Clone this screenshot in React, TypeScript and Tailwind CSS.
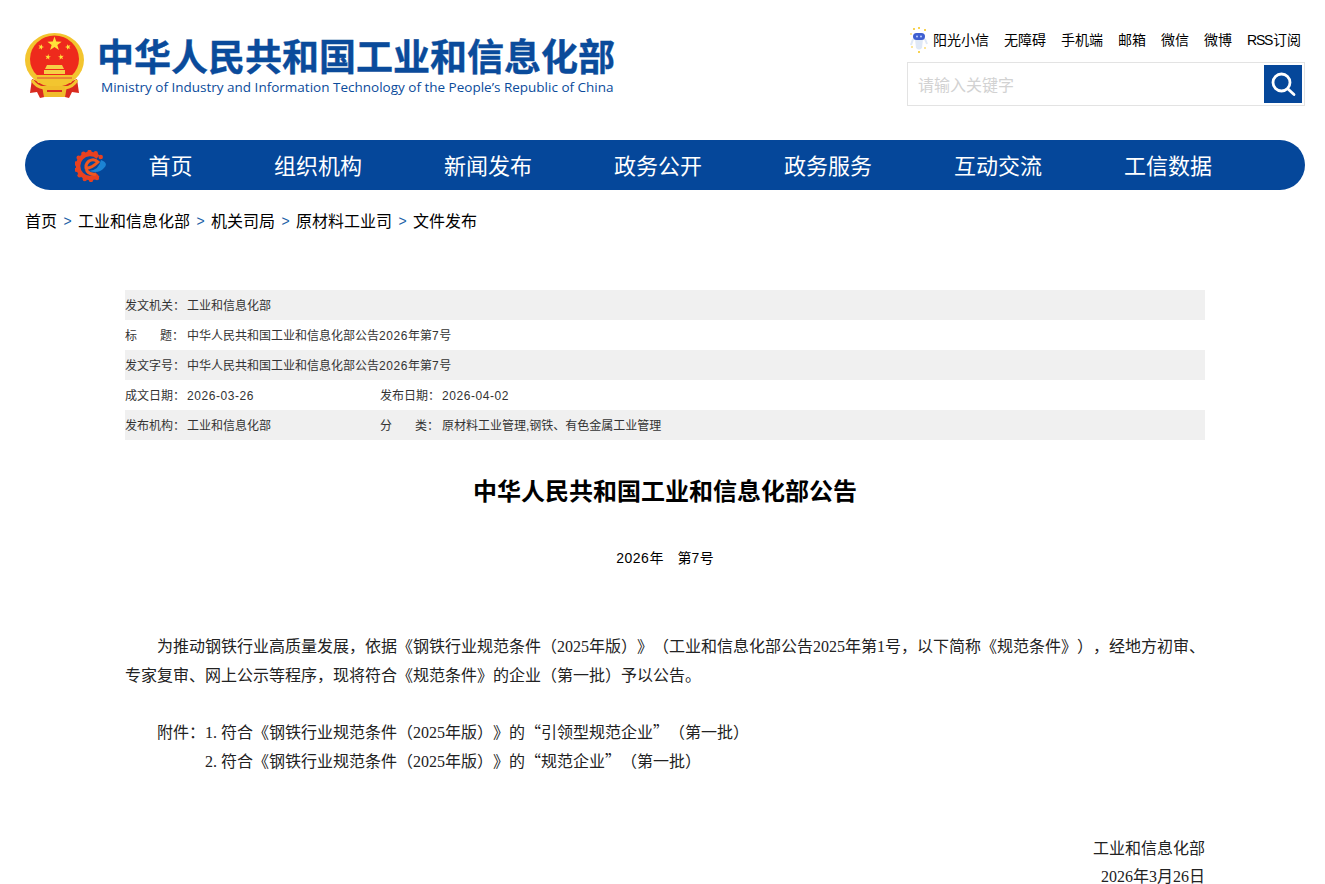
const cjk = "font-['Liberation_Sans','Noto_Sans_CJK_SC',sans-serif]"
const serif = "font-['Liberation_Serif','Noto_Sans_CJK_SC',serif]"

const topLinks = ['无障碍', '手机端', '邮箱', '微信', '微博']
const navItems = ['组织机构', '新闻发布', '政务公开', '政务服务', '互动交流', '工信数据']
const crumbs = ['工业和信息化部', '机关司局', '原材料工业司', '文件发布']

function Star({ x, y, r, rot = 0 }: { x: number; y: number; r: number; rot?: number }) {
  const pts = []
  for (let i = 0; i < 10; i++) {
    const a = (Math.PI / 5) * i - Math.PI / 2 + rot
    const d = i % 2 ? r * 0.4 : r
    pts.push(`${x + d * Math.cos(a)},${y + d * Math.sin(a)}`)
  }
  return <polygon points={pts.join(' ')} fill="#ffe23a" />
}

function Emblem() {
  return (
    <svg width="60" height="66" viewBox="0 0 60 66" className="shrink-0">
      <path d="M7 46 L5 60 L12 59 L15 65 L24 63 L24 52 Z" fill="#d92a1f" />
      <path d="M52 46 L54 60 L47 59 L44 65 L36 63 L36 52 Z" fill="#d92a1f" />
      <ellipse cx="29.5" cy="27" rx="29.5" ry="27" fill="#f3c52f" />
      <ellipse cx="29.5" cy="26" rx="24.5" ry="23.5" fill="#ee2a1c" />
      <Star x={29.5} y={11} r={7.5} />
      <Star x={16} y={14} r={3} rot={0.3} />
      <Star x={43} y={14} r={3} rot={-0.3} />
      <Star x={23} y={24} r={3} rot={0.15} />
      <Star x={36} y={24} r={3} rot={-0.15} />
      <path d="M22 32 H37 L39 36 H20 Z M19 37 H40 V41 H19 Z" fill="#f6cf45" />
      <path d="M9 42 H50 L46 50 H13 Z" fill="#f3c52f" />
      <path d="M12 45 H47" stroke="#e0463a" strokeWidth="1" />
      <path d="M17 53 H42 L40 64 H19 Z" fill="#f0bd2b" />
      <path d="M22 58 H37" stroke="#d92a1f" strokeWidth="2" />
      <path d="M7 47 Q11 54 19 55" stroke="#f3c52f" strokeWidth="3" fill="none" />
      <path d="M52 47 Q48 54 40 55" stroke="#f3c52f" strokeWidth="3" fill="none" />
    </svg>
  )
}

function GearLogo() {
  const teeth = []
  for (let i = 0; i < 11; i++) {
    const a = ((i * 26 + 60) * Math.PI) / 180
    teeth.push(<circle key={i} cx={15 + 14 * Math.cos(a)} cy={16 + 14 * Math.sin(a)} r="2.2" fill="#e8411f" />)
  }
  return (
    <svg width="33" height="32" viewBox="0 0 33 32" className="shrink-0">
      {teeth}
      <path d="M23 7 A12 12 0 1 0 23 25" stroke="#e8411f" strokeWidth="4.5" fill="none" />
      <path d="M10 18 Q16 19 23 12 Q19 8 14 11 Q9 15 12 21 Q15 25 21 24" stroke="#f0571f" strokeWidth="3" fill="none" />
      <path d="M14 21 Q24 20 26 10 Q34 13 29 18 Q24 24 14 21 Z" fill="#1c83d4" />
    </svg>
  )
}

function Robot() {
  return (
    <svg width="18" height="26" viewBox="0 0 18 26" className="shrink-0">
      <path d="M5 12 H13 L12 21 Q9 24 6 21 Z" fill="#dfe8f6" />
      <path d="M3 12 L1 18 M15 12 L17 17" stroke="#dfe8f6" strokeWidth="2" />
      <rect x="3" y="6" width="12" height="7" rx="3.5" fill="#3f5fd0" />
      <circle cx="7" cy="9.5" r="1" fill="#bcd0ff" />
      <circle cx="11" cy="9.5" r="1" fill="#bcd0ff" />
      <g fill="#f5c518">
        <circle cx="4" cy="2" r="1" />
        <circle cx="9" cy="1" r="1" />
        <circle cx="15" cy="3" r="1" />
        <circle cx="1" cy="7" r="0.8" />
        <circle cx="2" cy="20" r="0.8" />
        <circle cx="9" cy="25" r="1" />
        <circle cx="15" cy="21" r="0.8" />
      </g>
    </svg>
  )
}

function Label({ a, b }: { a: string; b: string }) {
  return (
    <span className="flex w-[62px] shrink-0">
      <span className="flex w-[47px] justify-between">
        <span>{a}</span>
        <span>{b}</span>
      </span>
      <span>：</span>
    </span>
  )
}

function MetaRow({ children, shaded }: { children: React.ReactNode; shaded?: boolean }) {
  return <div className={`flex h-[30px] items-center pt-[1px] ${shaded ? 'bg-[#f0f0f0]' : ''}`}>{children}</div>
}

function Num({ children }: { children: React.ReactNode }) {
  return <span className="tracking-[0.55px]">{children}</span>
}

function Meta({ label, children }: { label: string; children: React.ReactNode }) {
  return (
    <div className="flex w-[255px] shrink-0 whitespace-nowrap">
      <span className="w-[62px] shrink-0">{label}：</span>
      <span>{children}</span>
    </div>
  )
}

// full-width curly quotes, as the CJK face draws them
function Q({ children }: { children: React.ReactNode }) {
  return <span className="font-['Noto_Sans_CJK_SC',sans-serif] leading-none">{children}</span>
}

export default function App() {
  return (
    <div className={`w-[1325px] bg-white ${cjk}`}>
      <header className="flex h-[140px] justify-between pl-[25px] pr-[20px]">
        <div className="flex pt-[33px]">
          <Emblem />
          <div className="ml-[12px]">
            <div className="mt-[5px] whitespace-nowrap text-[37px] font-bold leading-[42px] text-[#0a4b9b] [-webkit-text-stroke:0.4px_#0a4b9b]">中华人民共和国工业和信息化部</div>
            <div className="-mt-[2px] ml-[4px] whitespace-nowrap font-['Open_Sans',sans-serif] text-[13.5px] leading-[18px] text-[#0a4b9b]">
              Ministry of Industry and Information Technology of the People’s Republic of China
            </div>
          </div>
        </div>
        <div className="w-[398px] pt-[27px]">
          <div className="flex h-[26px] items-center justify-end gap-[15px] pr-[4px] text-[14px] text-black">
            <span className="flex items-center gap-[5px]">
              <Robot />
              阳光小信
            </span>
            {topLinks.map((t) => (
              <span key={t}>{t}</span>
            ))}
            <span>
              <span className="tracking-[-1.3px]">RSS</span>
              <span className="ml-[1px]">订阅</span>
            </span>
          </div>
          <div className="mt-[9px] flex h-[44px] items-center justify-between border border-[#e3e3e3] pl-[10px] pr-[2px]">
            <span className="pt-[3px] text-[16px] text-[#d2d2d2]">请输入关键字</span>
            <button className="flex h-[38px] w-[38px] items-center justify-center bg-[#05479a]">
              <svg width="26" height="26" viewBox="0 0 26 26" fill="none" stroke="white" strokeWidth="2.8" strokeLinecap="round">
                <circle cx="11.5" cy="11.5" r="8.5" />
                <path d="M18 18 L24 23.5" />
              </svg>
            </button>
          </div>
        </div>
      </header>

      <nav className="ml-[25px] mr-[20px] flex h-[50px] items-center rounded-[25px] bg-[#05479a] pl-[50px] pt-[2px] text-[22px] text-white">
        <GearLogo />
        <span className="w-[125px] text-center">首页</span>
        {navItems.map((t) => (
          <span key={t} className="w-[170px] text-center">
            {t}
          </span>
        ))}
      </nav>

      <div className="ml-[25px] mt-[20px] flex h-[23px] items-center text-[16px] text-black">
        <span>首页</span>
        {crumbs.map((c) => (
          <span key={c} className="flex items-center">
            <span className="w-[21px] text-center text-[14px] text-[#1e5fa8]">&gt;</span>
            <span>{c}</span>
          </span>
        ))}
      </div>

      <main className="ml-[125px] mr-[120px] mt-[57px]">
        <div className="text-[12px] text-[#333]">
          <MetaRow shaded>
            <Meta label="发文机关">工业和信息化部</Meta>
          </MetaRow>
          <MetaRow>
            <Label a="标" b="题" />
            <span>
              中华人民共和国工业和信息化部公告<Num>2026</Num>年第<Num>7</Num>号
            </span>
          </MetaRow>
          <MetaRow shaded>
            <Meta label="发文字号">
              中华人民共和国工业和信息化部公告<Num>2026</Num>年第<Num>7</Num>号
            </Meta>
          </MetaRow>
          <MetaRow>
            <Meta label="成文日期">
              <Num>2026-03-26</Num>
            </Meta>
            <Meta label="发布日期">
              <Num>2026-04-02</Num>
            </Meta>
          </MetaRow>
          <MetaRow shaded>
            <Meta label="发布机构">工业和信息化部</Meta>
            <Label a="分" b="类" />
            <span>原材料工业管理,钢铁、有色金属工业管理</span>
          </MetaRow>
        </div>

        <h1 className="mt-[34px] text-center text-[24px] font-bold leading-[36px] text-black">中华人民共和国工业和信息化部公告</h1>
        <p className="mt-[36px] text-center text-[14px] leading-[24px] text-black">
          <span className="tracking-[0.5px]">2026</span>年　第<span className="tracking-[0.5px]">7</span>号
        </p>

        <div className={`mt-[63px] text-[16px] leading-[28.8px] text-[#222] [text-spacing-trim:space-all] ${serif}`}>
          <p className="indent-[32px]">
            为推动钢铁行业高质量发展，依据《钢铁行业规范条件（2025年版）》（工业和信息化部公告2025年第1号，以下简称《规范条件》），经地方初审、专家复审、网上公示等程序，现将符合《规范条件》的企业（第一批）予以公告。
          </p>
          <p className="mt-[28.8px] pl-[32px]">
            附件：1<span className="tracking-[4px]">.</span>符合《钢铁行业规范条件（2025年版）》的<Q>“</Q>引领型规范企业<Q>”</Q>（第一批）
          </p>
          <p className="pl-[80px]">
            2<span className="tracking-[4px]">.</span>符合《钢铁行业规范条件（2025年版）》的<Q>“</Q>规范企业<Q>”</Q>（第一批）
          </p>
          <p className="mt-[57.6px] text-right">工业和信息化部</p>
          <p className="text-right">2026年3月26日</p>
        </div>
      </main>
    </div>
  )
}
